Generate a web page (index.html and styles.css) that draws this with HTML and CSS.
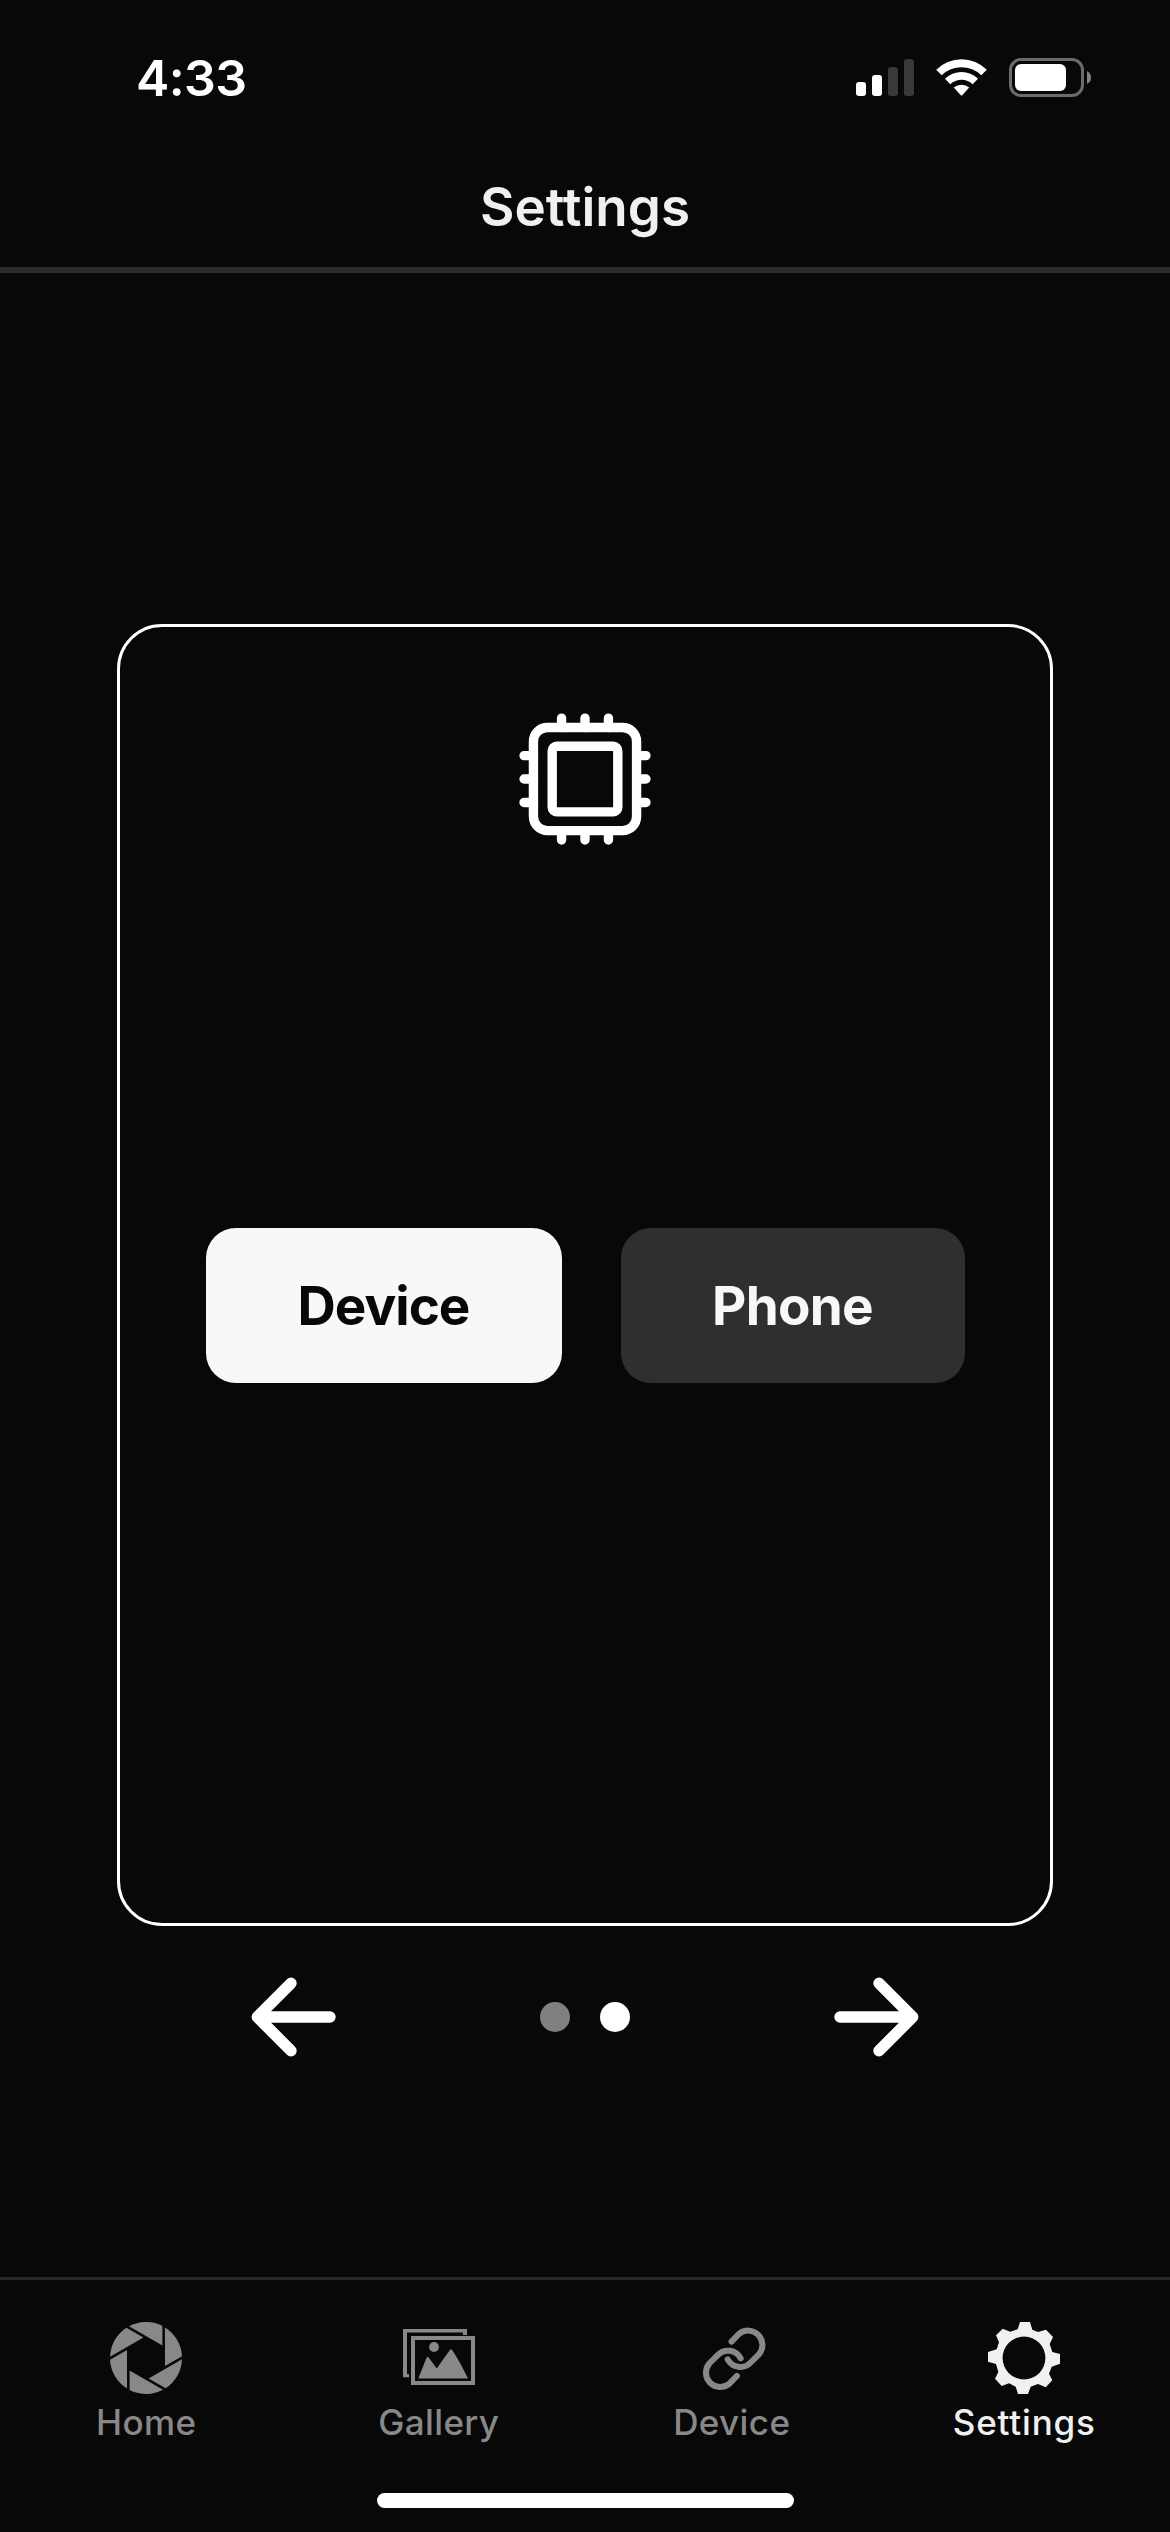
FILE: index.html
```html
<!DOCTYPE html>
<html lang="en">
<head>
<meta charset="utf-8">
<title>Settings</title>
<link rel="stylesheet" href="styles.css">
</head>
<body>
<div class="screen">
  <div class="status">
    <span class="time">4:33</span>
    <svg class="indicators" viewBox="0 0 240 44" width="240" height="44" fill="#fff">
      <rect x="4" y="26" width="10" height="14" rx="3"/>
      <rect x="20" y="19" width="10" height="21" rx="3"/>
      <rect x="36" y="11" width="10" height="29" rx="3" fill="#393939"/>
      <rect x="52" y="3" width="10" height="37" rx="3" fill="#393939"/>
      <path d="M84.2 13.8A35.8 35.8 0 0 1 134.8 13.8L129.3 19.2A28.5 28.5 0 0 0 89.7 19.2Z"/>
      <path d="M93 22.8A23.4 23.4 0 0 1 126 22.8L120.7 28.2A16 16 0 0 0 98.3 28.2Z"/>
      <path d="M101.8 31.6A11.5 11.5 0 0 1 117.2 31.6L110.2 39.2Q109.5 40 108.8 39.2Z"/>
      <rect x="158.5" y="3.5" width="72" height="36" rx="10.5" fill="none" stroke="#6b6b6b" stroke-width="3"/>
      <rect x="163" y="8" width="51" height="27" rx="6"/>
      <path d="M235 15Q239 17 239 21.5Q239 26 235 28Z" fill="#848484"/>
    </svg>
  </div>
  <header class="header"><h1 class="title">Settings</h1></header>
  <main class="main">
    <section class="card">
      <svg class="chip" viewBox="0 0 16 16" width="150" height="150" fill="none" stroke="#fff">
        <rect x="2.5" y="2.5" width="11" height="11" rx="1.5"/>
        <rect x="4.5" y="4.5" width="7" height="7" rx="0.5"/>
        <path stroke-linecap="round" d="M5.5 2.5v-1M8 2.5v-1M10.5 2.5v-1M5.5 13.5v1M8 13.5v1M10.5 13.5v1M2.5 5.5h-1M2.5 8h-1M2.5 10.5h-1M13.5 5.5h1M13.5 8h1M13.5 10.5h1"/>
      </svg>
      <div class="choices">
        <button class="choice choice-device selected">Device</button>
        <button class="choice choice-phone">Phone</button>
      </div>
    </section>
    <nav class="pager">
      <svg class="arrow" viewBox="0 0 96 96" width="96" height="96"><path d="M84 48H11.5M45 14.3L11.3 48L45 81.7"/></svg>
      <div class="dots"><span class="dot"></span><span class="dot current"></span></div>
      <svg class="arrow" viewBox="0 0 96 96" width="96" height="96"><path d="M12 48H84.5M51 14.3L84.7 48L51 81.7"/></svg>
    </nav>
  </main>
  <nav class="tabs">
    <a class="tab">
      <svg class="icon" viewBox="0 0 72 72" fill="currentColor">
        <defs><path id="blade" d="M19 4.3A36 36 0 0 1 52.4 3.9V23.5Z"/></defs>
        <use href="#blade"/>
        <use href="#blade" transform="rotate(60 36 36)"/>
        <use href="#blade" transform="rotate(120 36 36)"/>
        <use href="#blade" transform="rotate(180 36 36)"/>
        <use href="#blade" transform="rotate(240 36 36)"/>
        <use href="#blade" transform="rotate(300 36 36)"/>
      </svg>
      <span class="label">Home</span>
    </a>
    <a class="tab">
      <svg class="icon" viewBox="0 0 72 72" fill="currentColor">
        <path d="M0 7H64V13H60V10.5H4V52H6V55.3H0Z"/>
        <path fill-rule="evenodd" d="M8 14H72V63H8ZM12 18V59H68V18Z"/>
        <circle cx="31" cy="25" r="4.9"/>
        <path d="M15.3 56.5L23.3 36.2Q24.5 34 26 36L33.7 46.5L46.7 28.2Q48 26.5 49.3 28.3Q56.5 39 65 56.5Z"/>
      </svg>
      <span class="label">Gallery</span>
    </a>
    <a class="tab">
      <svg class="icon" viewBox="0 0 72 72" fill="none" stroke="currentColor" stroke-width="6" stroke-linecap="round">
        <defs><path id="loop" d="M35.5 19.7L42.9 12A14.3 14.3 0 0 1 63.1 32.1L54.7 40.5A14.3 14.3 0 0 1 31.7 37.3"/></defs>
        <use href="#loop"/>
        <use href="#loop" transform="rotate(180 38.2 36.8)"/>
      </svg>
      <span class="label">Device</span>
    </a>
    <a class="tab active">
      <svg class="icon" viewBox="0 0 72 72" fill="currentColor">
        <path fill-rule="evenodd" d="M32 0H42L44.3 7.7L50 10L58 7.7L65 15L61.7 22L64.3 30L72 32V41.7L63.7 44.7L61 51.7L64.3 58.3L57.7 65.3L50 62L42.7 64.7L40 72H30L27.7 64.7L21 61.3L13.7 64L7 56.7L10.3 50L8 42L0 39.7V30L8.7 27.3L11 20.3L8 13.3L14.7 6.7L22.3 9.7L29.7 7.3ZM36 14.6A21.4 21.4 0 1 0 36 57.4A21.4 21.4 0 1 0 36 14.6Z"/>
      </svg>
      <span class="label">Settings</span>
    </a>
  </nav>
  <div class="home-area"><div class="home-bar"></div></div>
</div>
</body>
</html>
```
FILE: styles.css
```css
* { box-sizing: border-box; }
body { margin: 0; background: #080808; }
.screen {
  width: 1170px;
  height: 2532px;
  display: flex;
  flex-direction: column;
  background: #080808;
  color: #f0f0f0;
  font-family: Inter, "Liberation Sans", sans-serif;
}
.status {
  height: 141px;
  padding: 14px 78px 0 136px;
  display: flex;
  align-items: center;
  justify-content: space-between;
}
.time { color: #fff; font-size: 50px; font-weight: 600; line-height: 60px; letter-spacing: -0.6px; }
.indicators { display: block; }
.header {
  height: 132px;
  padding-top: 6px;
  border-bottom: 6px solid #2a2a2a;
  display: flex;
  align-items: center;
  justify-content: center;
}
.title { margin: 0; font-size: 53px; font-weight: 600; line-height: 64px; }
.main { flex: 1; padding-top: 351px; display: flex; flex-direction: column; align-items: center; }
.card {
  width: 936px;
  height: 1302px;
  flex: none;
  border: 3px solid #fff;
  border-radius: 45px;
  padding-top: 77px;
  display: flex;
  flex-direction: column;
  align-items: center;
}
.chip { display: block; }
.choices { margin-top: 374px; display: flex; gap: 59px; }
.choice {
  height: 155px;
  padding: 1px 0 0;
  border: 0;
  border-radius: 30px;
  background: #2f2f2f;
  color: #f8f8f8;
  font: 700 53px/64px Inter, "Liberation Sans", sans-serif;
  letter-spacing: -1px;
}
.choice-device { width: 356px; }
.choice-phone { width: 344px; letter-spacing: -0.7px; }
.selected { background: #f8f8f8; color: #080808; }
.pager { width: 678px; margin-top: 43px; display: flex; align-items: center; justify-content: space-between; }
.arrow {
  display: block;
  fill: none;
  stroke: #fff;
  stroke-width: 11.4px;
  stroke-linecap: round;
  stroke-linejoin: round;
}
.dots { display: flex; gap: 30px; }
.dot { width: 30px; height: 30px; border-radius: 50%; background: #808080; }
.current { background: #fff; }
.tabs { height: 193px; border-top: 3px solid #272727; display: grid; grid-template-columns: repeat(4, 1fr); }
.tab { padding-top: 42px; display: flex; flex-direction: column; align-items: center; color: #888; }
.tab:nth-child(n+3) { padding-left: 1px; }
.active { color: #f0f0f0; }
.icon { display: block; width: 72px; height: 72px; }
.label { margin-top: 6px; font-size: 35px; font-weight: 500; line-height: 44px; letter-spacing: 0.4px; }
.active .label { letter-spacing: 0.8px; }
.home-area { height: 62px; display: flex; justify-content: center; padding-top: 23px; }
.home-bar { width: 417px; height: 15px; border-radius: 8px; background: #fff; }
```
